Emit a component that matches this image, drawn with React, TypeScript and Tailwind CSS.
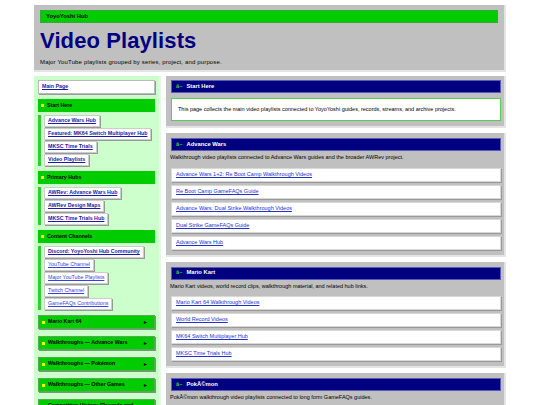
import React from "react";

type NavLink = { label: string; bold?: boolean };

const groups: { title: string; links: NavLink[] }[] = [
  {
    title: "Start Here",
    links: [
      { label: "Advance Wars Hub", bold: true },
      { label: "Featured: MK64 Switch Multiplayer Hub", bold: true },
      { label: "MKSC Time Trials", bold: true },
      { label: "Video Playlists", bold: true },
    ],
  },
  {
    title: "Primary Hubs",
    links: [
      { label: "AWRev: Advance Wars Hub", bold: true },
      { label: "AWRev Design Maps", bold: true },
      { label: "MKSC Time Trials Hub", bold: true },
    ],
  },
  {
    title: "Content Channels",
    links: [
      { label: "Discord: YoyoYoshi Hub Community", bold: true },
      { label: "YouTube Channel" },
      { label: "Major YouTube Playlists" },
      { label: "Twitch Channel" },
      { label: "GameFAQs Contributions" },
    ],
  },
];

const collapsed = [
  "Mario Kart 64",
  "Walkthroughs — Advance Wars",
  "Walkthroughs — Pokémon",
  "Walkthroughs — Other Games",
  "Competitive History (Records and",
];

const sections = [
  {
    title: "Advance Wars",
    desc: "Walkthrough video playlists connected to Advance Wars guides and the broader AWRev project.",
    links: [
      "Advance Wars 1+2: Re Boot Camp Walkthrough Videos",
      "Re Boot Camp GameFAQs Guide",
      "Advance Wars: Dual Strike Walkthrough Videos",
      "Dual Strike GameFAQs Guide",
      "Advance Wars Hub",
    ],
  },
  {
    title: "Mario Kart",
    desc: "Mario Kart videos, world record clips, walkthrough material, and related hub links.",
    links: [
      "Mario Kart 64 Walkthrough Videos",
      "World Record Videos",
      "MK64 Switch Multiplayer Hub",
      "MKSC Time Trials Hub",
    ],
  },
  {
    title: "PokÃ©mon",
    desc: "PokÃ©mon walkthrough video playlists connected to long form GameFAQs guides.",
    links: ["Pokémon Walkthrough Videos"],
  },
];

function Bullet() {
  return <span className="inline-block w-[3px] h-[3px] bg-[#ffff00] mr-[3px] shrink-0" />;
}

function SectionBar({ title }: { title: string }) {
  return (
    <div className="h-[13px] bg-[#000080] border border-[#5a5ab8] flex items-center px-[4px] text-white font-bold text-[5.8px] leading-none">
      <span className="text-[#33cc33] mr-[4px]">â–</span>
      {title}
    </div>
  );
}

export default function App() {
  return (
    <div
      className="min-h-[405px] bg-white pt-[5px]"
      style={{ fontFamily: '"Liberation Sans", Arial, sans-serif' }}
    >
      <div className="w-[472px] mx-auto">
        <div className="bg-[#c0c0c0] border-r-2 border-b-2 border-[#e4e4e4] px-[6px] pt-[5px] pb-[5px]">
          <div className="h-[13px] bg-[#00cc00] border border-[#33aa33] flex items-center px-[5px] text-[5.8px] font-bold leading-none">
            YoyoYoshi Hub
          </div>
          <h1 className="text-[#000080] font-bold text-[22px] leading-none mt-[7px] tracking-[0.1px]">
            Video Playlists
          </h1>
          <p className="text-[6px] tracking-[0.15px] leading-none mt-[7px] text-black">
            Major YouTube playlists grouped by series, project, and purpose.
          </p>
        </div>

        <div className="flex gap-[5px] mt-[4px]">
          <div className="w-[127px] shrink-0 bg-[#ccffcc] border-r-2 border-[#e4f8e4] px-[4px] pt-[4px] pb-[10px] flex flex-col">
            <div className="h-[14px] bg-white border border-[#bbbbbb] shadow-[1px_1px_0_#999] flex items-center px-[3px]">
              <span className="text-[5.3px] font-bold underline text-[#1a1aa6] leading-none">Main Page</span>
            </div>

            {groups.map((g) => (
              <div key={g.title} className="mt-[5px]">
                <div className="h-[13px] bg-[#00cc00] flex items-center px-[3px] text-[5.3px] font-bold leading-none">
                  <Bullet />
                  {g.title}
                </div>
                <div className="mt-[3px] border-l-[3px] border-[#33cc33] pl-[3px] flex flex-col items-start gap-[1px]">
                  {g.links.map((l) => (
                    <div
                      key={l.label}
                      className="h-[12px] bg-white border border-[#cccccc] shadow-[1px_1px_0_#999] flex items-center px-[3px]"
                    >
                      <span
                        className={
                          l.bold
                            ? "text-[5.3px] font-bold underline text-[#1a1aa6] leading-none whitespace-nowrap"
                            : "text-[5.3px] underline text-[#3344dd] leading-none whitespace-nowrap"
                        }
                      >
                        {l.label}
                      </span>
                    </div>
                  ))}
                </div>
              </div>
            ))}

            <div className="flex flex-col gap-[7px] mt-[5px]">
              {collapsed.map((c) => (
                <div
                  key={c}
                  className="h-[14px] bg-[#00cc00] border border-[#55aa55] shadow-[1px_1px_0_#779977] flex items-center px-[3px] text-[5.3px] font-bold leading-none"
                >
                  <Bullet />
                  <span className="flex-1 whitespace-nowrap overflow-hidden">{c}</span>
                  <span className="text-[5px] mr-[3px]">►</span>
                </div>
              ))}
            </div>
          </div>

          <div className="flex-1 flex flex-col gap-[5px]">
            <div className="bg-[#c0c0c0] border-r-2 border-b-2 border-[#e4e4e4] pl-[5px] pr-[3px] pt-[4px] pb-[5px]">
              <SectionBar title="Start Here" />
              <div className="mt-[5px] h-[23px] bg-white border border-[#55cc55] flex items-center px-[6px] text-[5.5px] leading-none">
                This page collects the main video playlists connected to YoyoYoshi guides, records, streams, and archive projects.
              </div>
            </div>

            {sections.map((s) => (
              <div
                key={s.title}
                className="bg-[#c0c0c0] border-r-2 border-b-2 border-[#e4e4e4] pl-[5px] pr-[3px] pt-[5px] pb-[5px]"
              >
                <SectionBar title={s.title} />
                <p className="text-[5.5px] leading-none mt-[4px] -ml-[1px] text-black">{s.desc}</p>
                <div className="mt-[7px] flex flex-col gap-[3px]">
                  {s.links.map((l) => (
                    <div
                      key={l}
                      className="h-[14px] bg-white border border-[#d8d8d8] shadow-[1px_1px_0_#999] flex items-center px-[4px]"
                    >
                      <span className="text-[5.5px] underline text-[#2233cc] leading-none">{l}</span>
                    </div>
                  ))}
                </div>
              </div>
            ))}
          </div>
        </div>
      </div>
    </div>
  );
}
